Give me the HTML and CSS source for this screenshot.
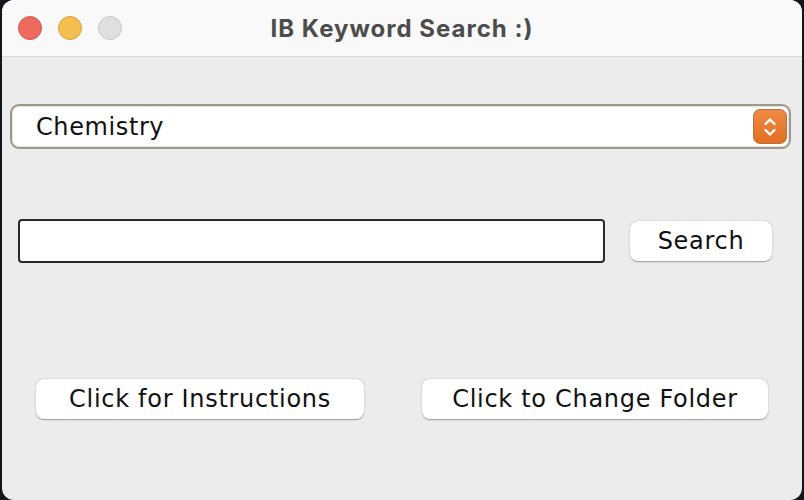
FILE: index.html
```
<!DOCTYPE html>
<html>
<head>
<meta charset="utf-8">
<link rel="stylesheet" href="styles.css">
</head>
<body>
<div class="window">
  <div class="titlebar">
    <div class="lights">
      <span class="light red"></span>
      <span class="light yellow"></span>
      <span class="light gray"></span>
    </div>
    <div class="title">IB Keyword Search :)</div>
  </div>
  <div class="content">
    <div class="combo">
      <span class="combo-text">Chemistry</span>
      <span class="combo-arrow">
        <svg width="14" height="22" viewBox="0 0 14 22"><path d="M2.5 8 L7 3.5 L11.5 8 M2.5 14 L7 18.5 L11.5 14" fill="none" stroke="#fff" stroke-width="2.4" stroke-linecap="round" stroke-linejoin="round"/></svg>
      </span>
    </div>
    <div class="search-row">
      <div class="field"></div>
      <div class="btn search-btn">Search</div>
    </div>
    <div class="bottom-row">
      <div class="btn instr-btn">Click for Instructions</div>
      <div class="btn folder-btn">Click to Change Folder</div>
    </div>
  </div>
</div>
</body>
</html>
```
FILE: styles.css
```
html, body {
  margin: 0;
  padding: 0;
  background: #15161b;
  width: 804px;
  height: 500px;
  overflow: hidden;
}
.window {
  margin-left: 2px;
  width: 800px;
  height: 500px;
  background: #ececec;
  border-radius: 12px;
  overflow: hidden;
  display: flex;
  flex-direction: column;
  font-family: "DejaVu Sans", sans-serif;
}
.titlebar {
  height: 56px;
  background: #f9f9f9;
  border-bottom: 1px solid #d6d6d6;
  position: relative;
  display: flex;
  align-items: center;
  justify-content: center;
  flex-shrink: 0;
}
.lights {
  position: absolute;
  left: 16px;
  top: 16px;
  display: flex;
  gap: 16px;
}
.light {
  width: 22px;
  height: 22px;
  border-radius: 50%;
  border: 1px solid transparent;
}
.red { background: #ee6a5f; border-color: #d8584d; }
.yellow { background: #f5bf4f; border-color: #d9a33a; }
.gray { background: #dfdfdf; border-color: #c8c8c8; }
.title {
  font-family: "Inter", "Liberation Sans", sans-serif;
  font-weight: 700;
  font-size: 24px;
  letter-spacing: 1px;
  color: #4c4c4c;
}
.content {
  flex: 1;
  display: flex;
  flex-direction: column;
  padding: 47px 0 0 0;
}
.combo {
  margin: 0 11px 0 8px;
  height: 41px;
  border: 2px solid #a0968c;
  border-radius: 9px;
  background: #fff;
  display: flex;
  align-items: center;
  justify-content: space-between;
  padding: 0 2px 0 24px;
  box-shadow: inset 0 0 0 1px #e6e2de;
}
.combo-text {
  font-size: 24px;
  letter-spacing: 0.6px;
  color: #111;
}
.combo-arrow {
  width: 32px;
  height: 33px;
  border-radius: 7px;
  background: linear-gradient(#ee8a44, #e36f22);
  border: 1px solid #b7703f;
  display: flex;
  align-items: center;
  justify-content: center;
}
.search-row {
  display: flex;
  align-items: center;
  margin-top: 70px;
  padding-left: 16px;
}
.field {
  width: 583px;
  height: 40px;
  border: 2px solid #2a2a2a;
  border-radius: 4px;
  background: #fff;
}
.btn {
  background: #fff;
  border-radius: 8px;
  box-shadow: 0 0.5px 1.5px rgba(0,0,0,0.35);
  display: flex;
  align-items: center;
  justify-content: center;
  font-size: 24px;
  letter-spacing: 0.7px;
  color: #111;
  height: 40px;
}
.search-btn {
  width: 142px;
  margin-left: 25px;
}
.bottom-row {
  display: flex;
  margin-top: 116px;
  padding-left: 34px;
}
.instr-btn {
  width: 328px;
}
.folder-btn {
  width: 346px;
  margin-left: 58px;
}
```
